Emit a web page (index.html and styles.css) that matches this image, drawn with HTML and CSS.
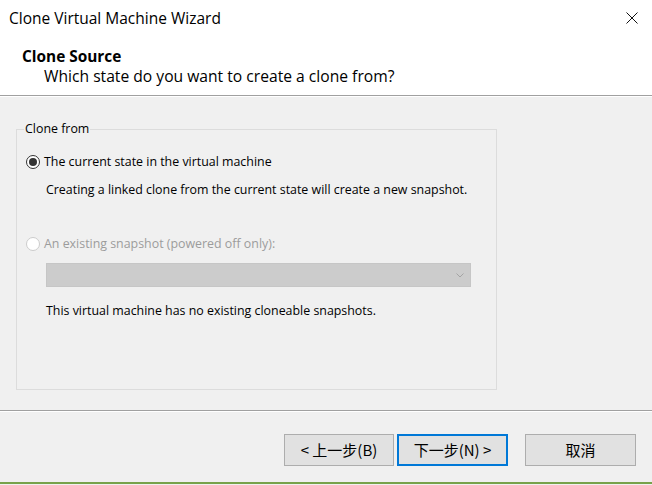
FILE: index.html
```html
<!DOCTYPE html>
<html>
<head>
<meta charset="utf-8">
<title>Clone Virtual Machine Wizard</title>
<link rel="stylesheet" href="styles.css">
</head>
<body>
<div class="window">
  <div class="titlebar">
    <span class="title">Clone Virtual Machine Wizard</span>
    <span class="close"><svg width="12" height="12" viewBox="0 0 12 12"><path d="M0.5 0.5 L11.5 11.5 M11.5 0.5 L0.5 11.5" stroke="#111" stroke-width="1" fill="none"/></svg></span>
  </div>
  <div class="header">
    <div class="h1">Clone Source</div>
    <div class="h2">Which state do you want to create a clone from?</div>
  </div>
  <div class="content">
    <fieldset class="group">
      <legend>Clone from</legend>
      <div class="opt opt-first"><span class="radio checked"></span><span>The current state in the virtual machine</span></div>
      <p class="desc desc-first">Creating a linked clone from the current state will create a new snapshot.</p>
      <div class="opt opt-second disabled"><span class="radio"></span><span>An existing snapshot (powered off only):</span></div>
      <div class="select"><svg width="8" height="5" viewBox="0 0 8 5"><path d="M0.5 0.5 L4 4 L7.5 0.5" stroke="#a4a4a4" stroke-width="1" fill="none"/></svg></div>
      <p class="desc desc-last">This virtual machine has no existing cloneable snapshots.</p>
    </fieldset>
  </div>
  <div class="footer">
    <button class="btn btn-back">&lt; 上一步(B)</button>
    <button class="btn btn-next">下一步(N) &gt;</button>
    <button class="btn btn-cancel">取消</button>
  </div>
</div>
</body>
</html>
```
FILE: styles.css
```css
html, body {
  margin: 0;
  padding: 0;
  background: #f0f0f0;
}
body {
  font-family: "Open Sans", "Noto Sans", sans-serif;
  color: #000;
  width: 652px;
  height: 485px;
  overflow: hidden;
}
.window {
  display: flex;
  flex-direction: column;
}
.titlebar {
  background: #fff;
  height: 36px;
  display: flex;
  align-items: center;
  justify-content: space-between;
  padding: 0 14px 0 9px;
}
.title {
  font-size: 15.5px;
  line-height: 36px;
}
.close {
  display: flex;
  width: 12px;
  height: 12px;
}
.header {
  background: #fff;
  padding: 11px 0 9px 22px;
  border-bottom: 1px solid #a0a0a0;
}
.h1 {
  font-weight: 700;
  font-size: 15.4px;
  line-height: 20px;
}
.h2 {
  font-size: 15.65px;
  line-height: 19px;
  padding-left: 22px;
}
.content {
  height: 314px;
  box-sizing: border-box;
  padding: 25px 0 0 16px;
  box-shadow: inset 0 1px 0 #fff;
}
.group {
  box-sizing: border-box;
  width: 481px;
  height: 269px;
  margin: 0;
  padding: 0 0 0 9px;
  border: 1px solid #dcdcdc;
  font-size: 12.4px;
}
.group legend {
  line-height: 16px;
  padding: 0 1px;
  margin-left: -2px;
}
.opt {
  display: flex;
  align-items: center;
  height: 20px;
  line-height: 20px;
}
.opt-first { margin-top: 15px; }
.opt-second { margin-top: 34px; }
.radio {
  box-sizing: border-box;
  width: 14px;
  height: 14px;
  border-radius: 50%;
  border: 1px solid #333;
  background: #fff;
  margin-right: 4px;
  display: flex;
  align-items: center;
  justify-content: center;
}
.radio.checked::after {
  content: "";
  width: 8px;
  height: 8px;
  border-radius: 50%;
  background: #333;
}
.disabled { color: #9c9c9c; }
.disabled .radio { border-color: #cccccc; }
.desc {
  margin: 0 0 0 20px;
  line-height: 20px;
}
.desc-first { margin-top: 8px; }
.desc-last { margin-top: 14px; }
.select {
  box-sizing: border-box;
  margin: 9px 0 0 20px;
  width: 425px;
  height: 24px;
  background: #cccccc;
  border: 1px solid #c6c6c6;
  display: flex;
  align-items: center;
  justify-content: flex-end;
  padding-right: 6px;
}
.select svg { display: block; }
.footer {
  box-sizing: border-box;
  height: 74px;
  border-top: 1px solid #a0a0a0;
  border-bottom: 2px solid #78a24a;
  box-shadow: inset 0 1px 0 #fff;
  display: flex;
  align-items: flex-start;
  justify-content: flex-end;
  padding: 23px 16px 0 0;
}
.btn {
  font-family: "Noto Sans CJK SC", "Noto Sans", sans-serif;
  font-size: 15px;
  color: #000;
  height: 32px;
  width: 111px;
  background: #e1e1e1;
  border: 1px solid #adadad;
  border-radius: 0;
  padding: 0;
  margin: 0;
  line-height: 28px;
}
.btn-back { width: 110px; }
.btn-next {
  border: 2px solid #0078d7;
  margin-left: 3px;
}
.btn-cancel { margin-left: 17px; }
```
